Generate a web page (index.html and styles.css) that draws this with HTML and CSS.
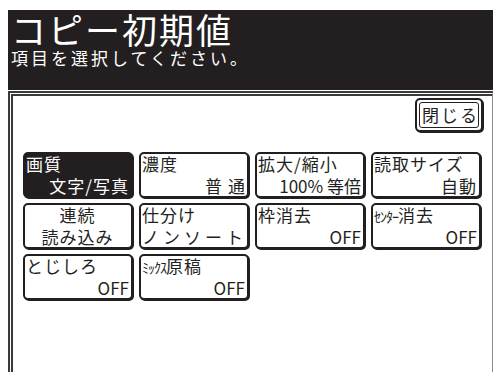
FILE: index.html
```html
<!DOCTYPE html>
<html lang="ja">
<head>
    <meta charset="UTF-8">
    <title>コピー初期値</title>
    <link rel="stylesheet" href="styles.css">
</head>
<body>

<header class="title-bar">
    <h1>コピー初期値</h1>
    <p>項目を選択してください。</p>
</header>

<main class="panel">
    <div class="close-row">
        <button class="close-btn"><span>閉じる</span></button>
    </div>

    <div class="grid">
        <button class="key selected">
            <span class="label">画質</span>
            <span class="value">文字/写真</span>
        </button>
        <button class="key">
            <span class="label">濃度</span>
            <span class="value wide">普通</span>
        </button>
        <button class="key">
            <span class="label">拡大/縮小</span>
            <span class="value half">100% 等倍</span>
        </button>
        <button class="key">
            <span class="label">読取サイズ</span>
            <span class="value">自動</span>
        </button>

        <button class="key centered">
            <span class="label">連続</span>
            <span class="value">読み込み</span>
        </button>
        <button class="key">
            <span class="label">仕分け</span>
            <span class="value left">ノンソート</span>
        </button>
        <button class="key">
            <span class="label">枠消去</span>
            <span class="value half">OFF</span>
        </button>
        <button class="key">
            <span class="label"><span class="kana">ｾﾝﾀｰ</span>消去</span>
            <span class="value half">OFF</span>
        </button>

        <button class="key">
            <span class="label">とじしろ</span>
            <span class="value half">OFF</span>
        </button>
        <button class="key">
            <span class="label"><span class="kana">ﾐｯｸｽ</span>原稿</span>
            <span class="value half">OFF</span>
        </button>
    </div>
</main>

</body>
</html>
```

FILE: styles.css
```css
html, body {
    margin: 0;
    height: 100%;
    overflow: hidden;
}
body {
    background: #fff;
    color: #231f20;
    font-family: "Noto Sans CJK JP", "DejaVu Sans", sans-serif;
    display: flex;
    flex-direction: column;
    padding: 10px 0 0 8px;
    box-sizing: border-box;
}
.title-bar {
    background: #231f20;
    color: #fff;
    height: 80px;
    padding: 0 0 0 3px;
    box-sizing: border-box;
}
.title-bar h1 {
    margin: 0;
    font-size: 35px;
    font-weight: normal;
    line-height: 38px;
    letter-spacing: 2px;
}
.title-bar p {
    margin: 0;
    font-size: 17px;
    line-height: 20px;
    letter-spacing: 3px;
}
.panel {
    flex: 1;
    margin-top: 1px;
    border-top: 5px double #3a3a3a;
    border-left: 5px double #3a3a3a;
    border-right: 1px solid #8a8a8a;
    padding: 2px 9px 0 10px;
}
.close-row {
    display: flex;
    justify-content: flex-end;
}
.close-btn {
    font: inherit;
    color: inherit;
    background: #fff;
    width: 68px;
    height: 34px;
    padding: 2px;
    border: 2px solid #231f20;
    border-radius: 5px;
    box-shadow: 1px 1px 0 #231f20;
    box-sizing: border-box;
}
.close-btn span {
    display: block;
    height: 100%;
    border: 1px solid #231f20;
    border-radius: 3px;
    font-size: 17px;
    line-height: 24px;
    letter-spacing: 2px;
    padding-left: 2px;
    white-space: nowrap;
    box-sizing: border-box;
}
.grid {
    display: grid;
    grid-template-columns: repeat(4, 110px);
    grid-auto-rows: 46px;
    column-gap: 6px;
    row-gap: 5px;
    margin-top: 20px;
}
.key {
    font: inherit;
    color: #231f20;
    background: #fff;
    border: 2px solid #231f20;
    border-radius: 5px;
    box-shadow: 1px 1px 0 #231f20;
    padding: 0 2px 0 1px;
    display: flex;
    flex-direction: column;
    justify-content: space-between;
    text-align: left;
    box-sizing: border-box;
}
.key.selected {
    background: #231f20;
    color: #fff;
}
.label, .value {
    display: block;
    font-size: 17px;
    line-height: 20px;
    letter-spacing: 1px;
    white-space: nowrap;
}
.value {
    text-align: right;
}
.value.wide {
    letter-spacing: 6px;
    margin-right: -6px;
}
.value.left {
    text-align: left;
    letter-spacing: 4px;
}
.value.half {
    letter-spacing: 0;
}
.kana {
    font-size: 14px;
    letter-spacing: -1px;
}
.key.centered .label,
.key.centered .value {
    text-align: center;
}
```
